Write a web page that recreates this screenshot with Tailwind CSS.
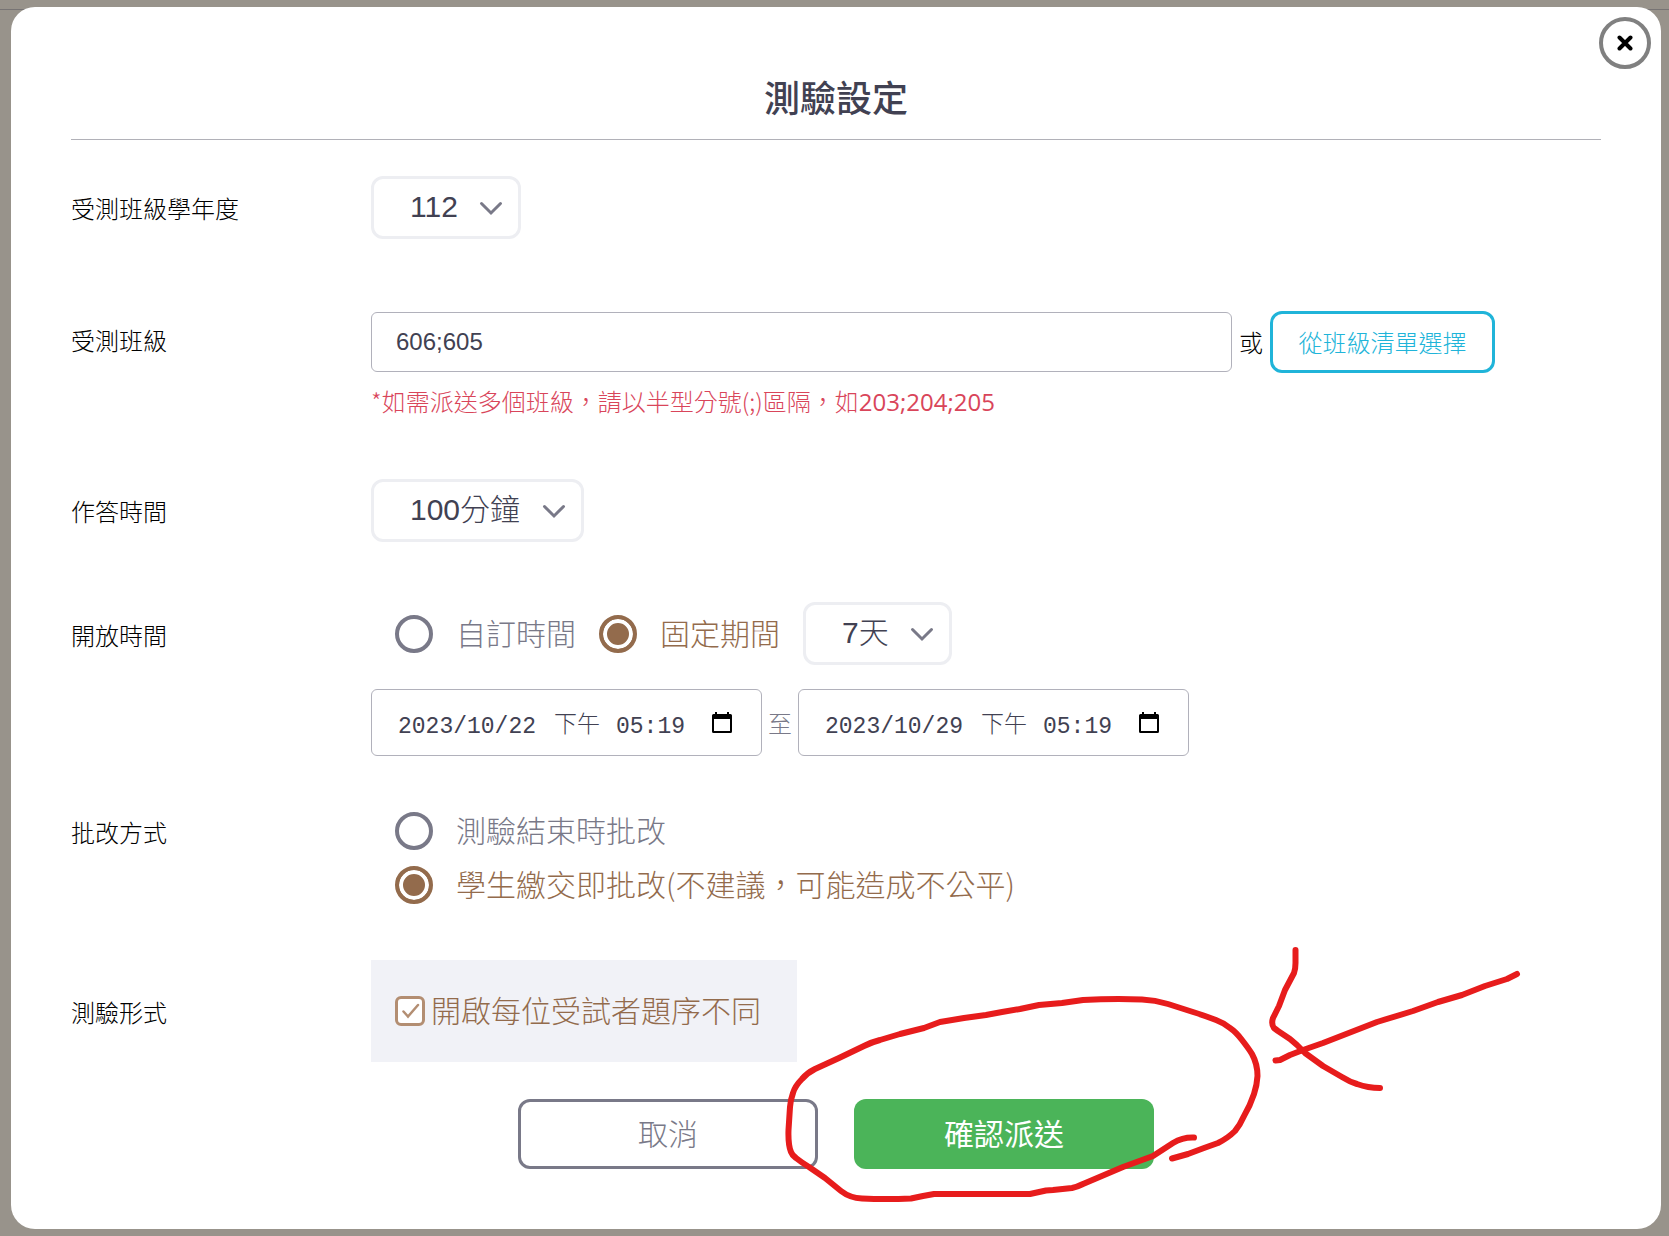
<!DOCTYPE html>
<html lang="zh-Hant">
<head>
<meta charset="utf-8">
<meta name="viewport" content="width=device-width, initial-scale=1">
<title>測驗設定</title>
<script src="https://cdn.jsdelivr.net/npm/@tailwindcss/browser@4"></script>
</head>
<body class="relative min-h-screen bg-[#98938b] py-[7px] pr-2 pl-[11px] font-['Noto_Sans_CJK_TC',sans-serif] font-light text-black">
  <!-- Page header edge behind the dialog -->
  <div class="absolute inset-x-0 top-[9px] h-px bg-[#777474]"></div>

  <main role="dialog" aria-labelledby="title" class="relative rounded-3xl bg-white px-[60px] pt-15 pb-[60px]">
    <button type="button" aria-label="關閉" class="absolute top-2.5 right-2.5 flex size-[52px] items-center justify-center rounded-full border-4 border-[#808080] bg-white">
      <svg class="size-4" viewBox="0 0 16 16" fill="none" stroke="#000" stroke-width="4" stroke-linecap="round"><path d="M2.500 2.500l11 11M13.500 2.500l-11 11"/></svg>
    </button>

    <h1 id="title" class="border-b border-[#b1b1b8] pb-3.5 text-center text-4xl leading-[58px] font-medium text-[#414152]">測驗設定</h1>

    <form>
      <!-- School year -->
      <div class="mt-9 grid grid-cols-[300px_1fr]">
        <label for="year" class="flex h-[63px] items-center text-2xl">受測班級學年度</label>
        <div class="flex">
          <div class="relative">
            <select id="year" class="h-[63px] appearance-none rounded-xl border-3 border-[#edeef2] bg-white pr-[60px] pb-0.5 pl-9 font-['Liberation_Sans','Noto_Sans_CJK_TC',sans-serif] text-3xl text-[#414152]"><option>112</option></select>
            <svg class="pointer-events-none absolute top-6 right-[18px] h-4 w-6" viewBox="0 0 24 16" fill="none" stroke="#797988" stroke-width="3" stroke-linecap="round"><path d="M2.500 3.500L12 13l9.500-9.500"/></svg>
          </div>
        </div>
      </div>

      <!-- Classes -->
      <div class="mt-[72px] grid grid-cols-[300px_1fr]">
        <label for="classes" class="flex h-[60px] items-center pb-0.5 text-2xl">受測班級</label>
        <div>
          <div class="flex h-[62px] items-center gap-[7px] text-2xl">
            <input id="classes" type="text" value="606;605" class="h-[60px] w-[70%] rounded-md border border-[#b1b1bb] px-6 font-['Liberation_Sans',sans-serif] text-2xl text-[#414152]">
            <span>或</span>
            <button type="button" class="h-[62px] w-[225px] rounded-xl border-3 border-[#20b4d9] text-2xl text-[#20b4d9]">從班級清單選擇</button>
          </div>
          <p class="mt-2.5 text-2xl leading-9 text-[#d9455a]">*如需派送多個班級，請以半型分號(;)區隔，如<span class="font-['Open_Sans',sans-serif] leading-none font-normal">203;204;205</span></p>
        </div>
      </div>

      <!-- Answering time -->
      <div class="mt-[60px] grid grid-cols-[300px_1fr]">
        <label for="duration" class="flex h-[63px] items-center text-2xl">作答時間</label>
        <div class="flex">
          <div class="relative">
            <select id="duration" class="h-[63px] appearance-none rounded-xl border-3 border-[#edeef2] bg-white pr-[60px] pb-0.5 pl-9 font-['Liberation_Sans','Noto_Sans_CJK_TC',sans-serif] text-3xl text-[#414152]"><option>100分鐘</option></select>
            <svg class="pointer-events-none absolute top-6 right-[18px] h-4 w-6" viewBox="0 0 24 16" fill="none" stroke="#797988" stroke-width="3" stroke-linecap="round"><path d="M2.500 3.500L12 13l9.500-9.500"/></svg>
          </div>
        </div>
      </div>

      <!-- Opening period -->
      <div role="radiogroup" aria-labelledby="period-label" class="mt-[60px] grid grid-cols-[300px_1fr]">
        <span id="period-label" class="flex h-[63px] items-center pt-0.5 text-2xl">開放時間</span>
        <div>
          <div class="flex items-center gap-[23px] pl-6 text-3xl leading-[34px]">
            <label class="flex items-center gap-[23px] text-[#797988]">
              <input type="radio" name="period" class="size-[38px] shrink-0 appearance-none rounded-full border-4 border-[#797988]"><span class="pb-1">自訂時間</span>
            </label>
            <label class="flex items-center gap-[23px] text-[#936b4c]">
              <input type="radio" name="period" checked class="size-[38px] shrink-0 appearance-none rounded-full border-4 border-[#936b4c] bg-[#936b4c] shadow-[inset_0_0_0_4px_white]"><span class="pb-1">固定期間</span>
            </label>
            <div class="relative">
              <select aria-label="天數" class="block h-[63px] appearance-none rounded-xl border-3 border-[#edeef2] bg-white pr-[60px] pb-0.5 pl-9 font-['Liberation_Sans','Noto_Sans_CJK_TC',sans-serif] text-3xl text-[#414152]"><option>7天</option></select>
              <svg class="pointer-events-none absolute top-6 right-[18px] h-4 w-6" viewBox="0 0 24 16" fill="none" stroke="#797988" stroke-width="3" stroke-linecap="round"><path d="M2.500 3.500L12 13l9.500-9.500"/></svg>
            </div>
          </div>
          <div class="mt-6 flex items-center gap-1.5 text-2xl text-[#797988]">
            <div class="flex h-[67px] w-[391px] items-center rounded-md border border-[#b1b1bb] pr-[29px] pl-[26px] font-['Liberation_Mono','Noto_Sans_CJK_TC',monospace] text-[23px] text-[#414152]">
              <input type="text" aria-label="開始日期" value="2023/10/22" class="h-10 w-[140px] pt-2">
              <select aria-label="開始時段" class="ml-4 h-10 w-[46px] appearance-none pt-2"><option>下午</option></select>
              <input type="text" aria-label="開始時間" value="05:19" class="ml-4 h-10 w-[71px] pt-2">
              <button type="button" aria-label="選擇開始時間" class="ml-auto"><svg class="h-[21px] w-5" viewBox="0 0 20 21"><path fill="#000" d="M3 0h2v2h10V0h2v2h1.500A1.500 1.500 0 0 1 20 3.500v16a1.500 1.500 0 0 1-1.500 1.500h-17A1.500 1.500 0 0 1 0 19.500v-16A1.500 1.500 0 0 1 1.500 2H3zM2 7v12h16V7z" fill-rule="evenodd"/></svg></button>
            </div>
            <span>至</span>
            <div class="flex h-[67px] w-[391px] items-center rounded-md border border-[#b1b1bb] pr-[29px] pl-[26px] font-['Liberation_Mono','Noto_Sans_CJK_TC',monospace] text-[23px] text-[#414152]">
              <input type="text" aria-label="結束日期" value="2023/10/29" class="h-10 w-[140px] pt-2">
              <select aria-label="結束時段" class="ml-4 h-10 w-[46px] appearance-none pt-2"><option>下午</option></select>
              <input type="text" aria-label="結束時間" value="05:19" class="ml-4 h-10 w-[71px] pt-2">
              <button type="button" aria-label="選擇結束時間" class="ml-auto"><svg class="h-[21px] w-5" viewBox="0 0 20 21"><path fill="#000" d="M3 0h2v2h10V0h2v2h1.500A1.500 1.500 0 0 1 20 3.500v16a1.500 1.500 0 0 1-1.500 1.500h-17A1.500 1.500 0 0 1 0 19.500v-16A1.500 1.500 0 0 1 1.500 2H3zM2 7v12h16V7z" fill-rule="evenodd"/></svg></button>
            </div>
          </div>
        </div>
      </div>

      <!-- Grading mode -->
      <div role="radiogroup" aria-labelledby="grading-label" class="mt-14 grid grid-cols-[300px_1fr]">
        <span id="grading-label" class="flex h-10 items-center text-2xl">批改方式</span>
        <div class="flex flex-col items-start gap-4 pl-6 text-3xl leading-[34px]">
          <label class="flex items-center gap-[23px] text-[#797988]">
            <input type="radio" name="grading" class="size-[38px] shrink-0 appearance-none rounded-full border-4 border-[#797988]"><span class="pb-1">測驗結束時批改</span>
          </label>
          <label class="flex items-center gap-[23px] text-[#936b4c]">
            <input type="radio" name="grading" checked class="size-[38px] shrink-0 appearance-none rounded-full border-4 border-[#936b4c] bg-[#936b4c] shadow-[inset_0_0_0_4px_white]"><span class="pb-1">學生繳交即批改(不建議，可能造成不公平)</span>
          </label>
        </div>
      </div>

      <!-- Test form -->
      <div class="mt-14 grid grid-cols-[300px_1fr]">
        <span class="flex h-[102px] items-center pt-0.5 text-2xl">測驗形式</span>
        <div class="flex">
          <label class="flex h-[102px] items-center gap-1.5 bg-[#f1f2f7] pr-9 pl-6 text-3xl leading-[34px] text-[#936b4c]">
            <span class="relative flex">
              <input type="checkbox" checked class="size-[30px] appearance-none rounded-md border-3 border-[#b38e72] bg-white">
              <svg class="pointer-events-none absolute inset-0 size-[30px]" viewBox="0 0 30 30" fill="none" stroke="#b38e72" stroke-width="2.500" stroke-linecap="round"><path d="M8.500 15.500l4.500 5L23 9"/></svg>
            </span>
            <span class="pb-1">開啟每位受試者題序不同</span>
          </label>
        </div>
      </div>

      <div class="relative mx-auto mt-[37px] flex w-[636px] gap-9 text-3xl">
        <button type="button" class="h-[70px] w-[300px] rounded-xl border-3 border-[#797988] pb-1 text-[#797988]">取消</button>
        <button type="submit" class="h-[70px] w-[300px] rounded-xl bg-[#4bb459] pb-1 font-normal text-white">確認派送</button>

        <!-- Hand-drawn circle and arrow marking the confirm button -->
        <svg class="pointer-events-none absolute -top-[159px] left-[262px] h-[270px] w-[750px] max-w-none" viewBox="780 940 750 270" fill="none" stroke="#e71c1c" stroke-width="6" stroke-linecap="round" stroke-linejoin="round">
          <path d="M1172 1158.500L1188 1154L1204 1148L1218 1143Q1228 1138 1235 1131Q1240 1125 1244 1116Q1250 1106 1254 1094Q1257 1085 1257.500 1076Q1257.500 1064 1252 1054Q1249 1049 1242 1040Q1236 1032 1230 1028Q1224 1023 1216 1020Q1206 1016 1193 1012L1168 1004Q1155 1000 1142 999.500Q1113 998.500 1083 1000L1062 1003L1039 1005L1020 1009L1002 1012L986 1015L964 1018L940 1022L924 1028L900 1034L880 1040Q872 1042 864 1046L839 1058L815 1069Q807 1073 802 1079Q795 1086 793 1093Q790.500 1100 790 1107L788.500 1130Q788 1145 791 1152Q792 1155 796 1158Q801 1162 809 1167L825 1178L841 1191Q850 1198 862 1198.500Q886 1199.500 911 1198.500L923 1196L934 1194H1030L1046 1190.500L1053 1190L1072 1188Q1077 1187 1083 1184L1123 1167L1153 1156L1173 1143Q1183 1137 1194 1137.500"/>
          <path d="M1295.500 950V963Q1295.500 969 1294 973L1285 990L1279 1006L1273 1018Q1271 1024 1274 1028L1278 1031L1290 1039L1297 1045L1305 1053L1323 1066L1342 1077Q1350 1082 1357 1084Q1368 1088 1380 1088"/>
          <path d="M1275.500 1060.500L1280 1060L1290 1055L1303 1050L1323 1043L1377 1022L1413 1011L1438 1002L1462 995L1485 986L1507 979L1517 974"/>
        </svg>
      </div>
    </form>
  </main>
</body>
</html>
